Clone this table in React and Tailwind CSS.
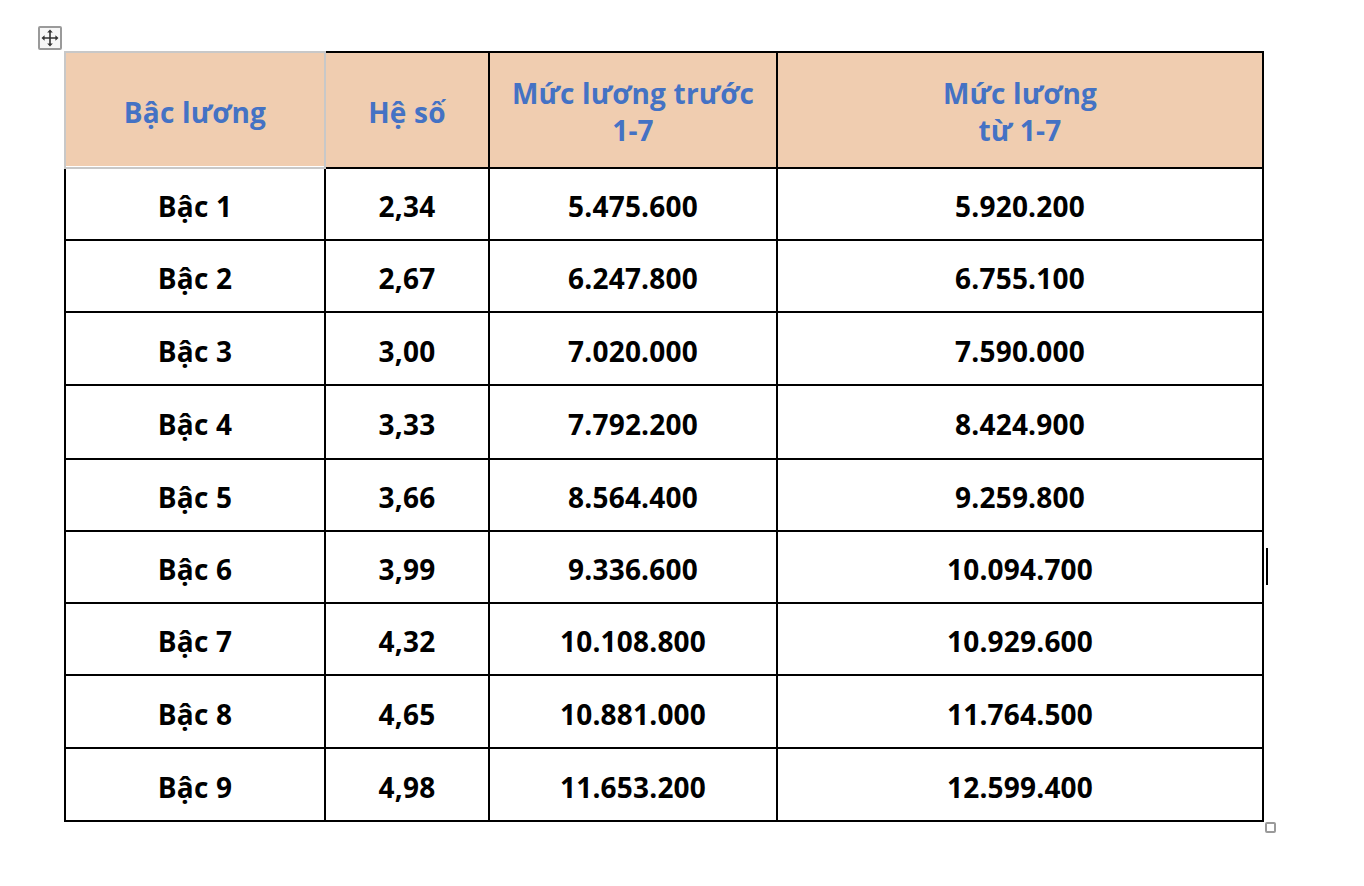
import React from 'react';

const rows = [
  { bac: 'Bậc 1', heSo: '2,34', truoc: '5.475.600', tu: '5.920.200', h: 'h-[72px]' },
  { bac: 'Bậc 2', heSo: '2,67', truoc: '6.247.800', tu: '6.755.100', h: 'h-[72px]' },
  { bac: 'Bậc 3', heSo: '3,00', truoc: '7.020.000', tu: '7.590.000', h: 'h-[73px]' },
  { bac: 'Bậc 4', heSo: '3,33', truoc: '7.792.200', tu: '8.424.900', h: 'h-[74px]' },
  { bac: 'Bậc 5', heSo: '3,66', truoc: '8.564.400', tu: '9.259.800', h: 'h-[72px]' },
  { bac: 'Bậc 6', heSo: '3,99', truoc: '9.336.600', tu: '10.094.700', h: 'h-[72px]' },
  { bac: 'Bậc 7', heSo: '4,32', truoc: '10.108.800', tu: '10.929.600', h: 'h-[72px]' },
  { bac: 'Bậc 8', heSo: '4,65', truoc: '10.881.000', tu: '11.764.500', h: 'h-[73px]' },
  { bac: 'Bậc 9', heSo: '4,98', truoc: '11.653.200', tu: '12.599.400', h: 'h-[73px]' },
];

const MoveIcon = () => (
  <svg width="18" height="18" viewBox="0 0 18 18">
    <path d="M9 2v14M2 9h14" stroke="#333" strokeWidth="1.6" />
    <path d="M9 0.5L6.2 3.6h5.6zM9 17.5l-2.8-3.1h5.6zM0.5 9l3.1-2.8v5.6zM17.5 9l-3.1-2.8v5.6z" fill="#333" />
  </svg>
);

const Cell = ({ children, className = '' }) => (
  <div className={`flex items-center justify-center text-center pt-[4px] border-r-2 border-b-2 border-black ${className}`}>
    {children}
  </div>
);

export default function App() {
  return (
    <div className="min-h-screen bg-white pl-[64px] pt-[51px]" style={{ fontFamily: '"Open Sans", "Noto Sans", sans-serif' }}>
      <div className="relative w-[1200px]">
        {/* table move handle */}
        <div className="absolute -left-[26px] -top-[25px] w-[24px] h-[24px] border-2 border-[#9a9a9a] rounded-[2px] bg-[#f7f7f7] flex items-center justify-center">
          <MoveIcon />
        </div>

        <div className="grid grid-cols-[262px_164px_288px_486px] font-bold text-[28px] tracking-[0.2px] text-black">
          {/* header */}
          <div className="h-[118px] pt-[4px] flex items-center justify-center bg-[#f0cdb0] border-2 border-[#c8c8c8] shadow-[inset_0_-1px_0_#ffffff] text-[#4472c4]">
            Bậc lương
          </div>
          <Cell className="h-[118px] border-t-2 bg-[#f0cdb0] text-[#4472c4]">Hệ số</Cell>
          <Cell className="h-[118px] border-t-2 bg-[#f0cdb0] text-[#4472c4] leading-[37px]">
            Mức lương trước<br />1-7
          </Cell>
          <Cell className="h-[118px] border-t-2 bg-[#f0cdb0] text-[#4472c4] leading-[37px]">
            Mức lương<br />từ 1-7
          </Cell>

          {rows.map((r) => (
            <React.Fragment key={r.bac}>
              <Cell className={`${r.h} border-l-2`}>{r.bac}</Cell>
              <Cell className={r.h}>{r.heSo}</Cell>
              <Cell className={r.h}>{r.truoc}</Cell>
              <Cell className={r.h}>{r.tu}</Cell>
            </React.Fragment>
          ))}
        </div>

        {/* text cursor */}
        <div className="absolute left-[1202px] top-[497px] w-[2px] h-[37px] bg-black" />

        {/* resize handle */}
        <div className="absolute left-[1201px] top-[771px] w-[11px] h-[11px] border-2 border-[#9a9a9a] rounded-[2px] bg-white" />
      </div>
    </div>
  );
}
